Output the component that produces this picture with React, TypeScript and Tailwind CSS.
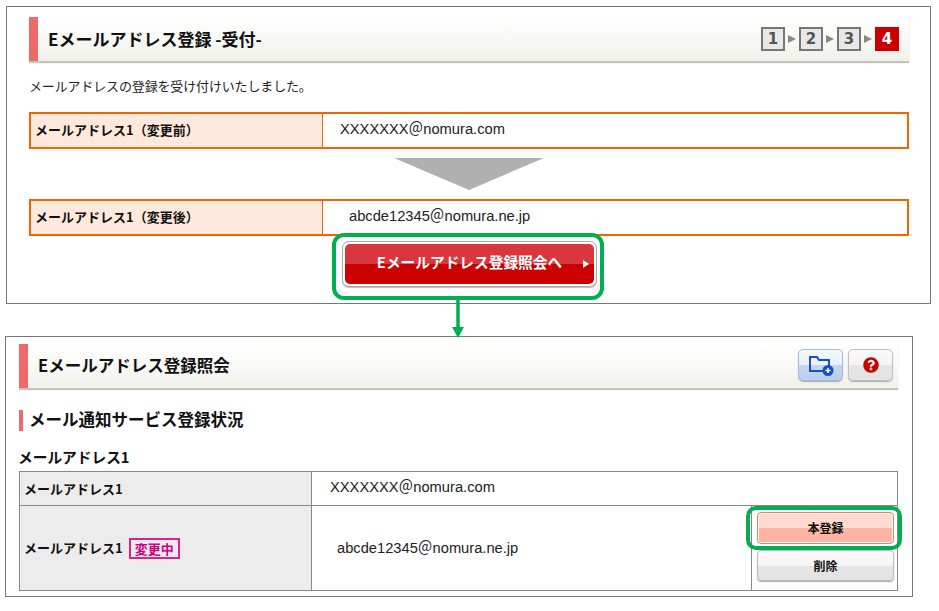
import { FaQuestionCircle } from "react-icons/fa";

const jp = "font-['Noto_Sans_CJK_JP','Liberation_Sans',sans-serif]";
const val = "font-['Liberation_Sans','Noto_Sans_CJK_JP',sans-serif]";

function PageTitle({ title, size, children }: { title: string; size: string; children?: React.ReactNode }) {
  return (
    <div className="flex h-[44px] items-center justify-between border-l-[9px] border-[#ec6a6a] bg-gradient-to-b from-white to-[#f1f1eb] shadow-[0_2px_1px_#c4c4bc]">
      <h1 className={`${jp} ${size} pb-[1px] pl-[10px] font-bold leading-none text-[#111]`}>{title}</h1>
      {children}
    </div>
  );
}

function StepBox({ n, active }: { n: number; active?: boolean }) {
  return (
    <div
      className={
        active
          ? "flex size-6 items-center justify-center bg-[#cc0000] font-['DejaVu_Sans',sans-serif] text-[15px] font-bold text-white"
          : "flex size-6 items-center justify-center border-2 border-[#777] bg-[#e8e8e8] font-['DejaVu_Sans',sans-serif] text-[15px] font-bold text-[#555]"
      }
    >
      {n}
    </div>
  );
}

function StepArrow() {
  return <div className="mx-[3px] h-0 w-0 border-y-[4px] border-l-[8px] border-y-transparent border-l-[#888]" />;
}

function OrangeRow({ label, value, pad }: { label: string; value: string; pad: string }) {
  return (
    <div className="flex h-[37px] border-2 border-[#f26500]">
      <div className={`${jp} flex w-[292px] items-center border-r border-[#f26500] bg-[#ffe9dc] pb-[2px] pl-[4px] text-[13px] font-bold text-[#111]`}>
        {label}
      </div>
      <div className={`${val} ${pad} flex flex-1 items-center pb-[2px] text-[14.7px] text-[#222]`}>{value}</div>
    </div>
  );
}

function GreyLabel({ children }: { children: React.ReactNode }) {
  return (
    <div className={`${jp} flex w-[292px] shrink-0 items-center gap-[6px] border-r border-[#888] bg-[#ececec] pl-[4px] text-[13px] font-bold text-[#111]`}>
      {children}
    </div>
  );
}

export default function App() {
  return (
    <div className="h-[611px] w-[939px] overflow-hidden bg-white">
      <section className="relative ml-[6px] mt-[6px] h-[298px] w-[925px] border border-[#777] pl-[22px] pr-[21px] pt-[10px]">
        <PageTitle title="Eメールアドレス登録 -受付-" size="text-[17px]">
          <div className="mr-[10px] flex items-center">
            <StepBox n={1} />
            <StepArrow />
            <StepBox n={2} />
            <StepArrow />
            <StepBox n={3} />
            <StepArrow />
            <StepBox n={4} active />
          </div>
        </PageTitle>
        <p className={`${jp} mt-[15px] text-[13px] leading-[19px] tracking-[-0.15px] text-[#222]`}>
          メールアドレスの登録を受け付けいたしました。
        </p>
        <div className="mt-[17px]">
          <OrangeRow label="メールアドレス1（変更前）" value="XXXXXXX＠nomura.com" pad="pl-[17px]" />
        </div>
        <div className="mx-auto mt-[9px] h-0 w-0 border-x-[75px] border-t-[32px] border-x-transparent border-t-[#b0b0b0]" />
        <div className="mt-[9px]">
          <OrangeRow label="メールアドレス1（変更後）" value="abcde12345＠nomura.ne.jp" pad="pl-[26px]" />
        </div>

        <div className="relative ml-[313px] mt-[5px] h-[46px] w-[255px] rounded-[7px] border border-[#aaa] bg-white p-[2px] shadow-[0_1px_1px_#bbb]">
          <button className="relative flex h-[40px] w-full items-center justify-center rounded-[5px] bg-[linear-gradient(#d9363e_0,#d9363e_50%,#cc0000_50%,#cc0000_100%)] pb-[3px] text-[14.7px] font-bold leading-none text-white">
            <span className={jp}>Eメールアドレス登録照会へ</span>
            <span className="absolute right-[5px] top-[16px] h-0 w-0 border-y-[4px] border-l-[6px] border-y-transparent border-l-white" />
          </button>
          <div className="absolute -bottom-[14px] -left-[11px] -right-[8px] -top-[9px] rounded-[12px] border-[4px] border-[#00b050]" />
          <svg className="absolute left-[109px] top-[58px]" width="12" height="38" viewBox="0 0 12 38">
            <path d="M6 0V28" stroke="#00b050" strokeWidth="3.5" />
            <path d="M0 27H12L6 38Z" fill="#00b050" />
          </svg>
        </div>
      </section>

      <section className="ml-[5px] mt-[32px] h-[261px] w-[908px] border border-[#777] pl-[13px] pr-[14px] pt-[7px]">
        <PageTitle title="Eメールアドレス登録照会" size="text-[16.5px]">
          <div className="mb-[2px] mr-[5px] flex gap-[5px]">
            <button className="flex h-[32px] w-[45px] items-center justify-center rounded-[5px] border border-[#a5bad8] bg-[linear-gradient(#f4f8fd_0,#e8f0fb_50%,#c4d7f2_50%,#b9cfee_100%)] shadow-[0_1px_1px_#aaa]">
              <svg width="26" height="22" viewBox="0 0 26 22">
                <path d="M2 3H9L11 6H21V17H2Z" fill="none" stroke="#1a4fc4" strokeWidth="2" />
                <circle cx="20" cy="16.5" r="5.5" fill="#1a4fc4" />
                <path d="M17.5 16.5H22.5M20 14V19" stroke="#fff" strokeWidth="1.6" />
              </svg>
            </button>
            <button className="flex h-[32px] w-[45px] items-center justify-center rounded-[5px] border border-[#c0c0c0] bg-[linear-gradient(#fafafa_0,#f4f4f4_50%,#e6e6e6_50%,#e2e2e2_100%)] shadow-[0_1px_1px_#aaa]">
              <FaQuestionCircle className="size-[16px] text-[#cc0000]" />
            </button>
          </div>
        </PageTitle>

        <h2 className={`${jp} mt-[22px] flex h-[21px] items-center border-l-[4px] border-[#ec6a6a] pb-[2px] pl-[6px] text-[16.5px] font-bold leading-none text-[#111]`}>
          メール通知サービス登録状況
        </h2>
        <h3 className={`${jp} -ml-px mt-[17px] h-[23px] text-[14.7px] font-bold leading-[18px] text-[#111]`}>メールアドレス1</h3>

        <div className="border border-[#888]">
          <div className="flex h-[34px] border-b border-[#888]">
            <GreyLabel>メールアドレス1</GreyLabel>
            <div className={`${val} flex flex-1 items-center pb-[2px] pl-[18px] text-[14.7px] text-[#222]`}>XXXXXXX＠nomura.com</div>
          </div>
          <div className="flex h-[84px]">
            <GreyLabel>
              メールアドレス1
              <span className="border-2 border-[#e0218a] px-[4px] text-[13px] leading-[17px] text-[#cc0080]">変更中</span>
            </GreyLabel>
            <div className={`${val} flex flex-1 items-center pl-[25px] text-[14.7px] text-[#222]`}>abcde12345＠nomura.ne.jp</div>
            <div className="flex w-[146px] flex-col gap-[6px] border-l border-[#888] pl-[5px] pt-[6px]">
              <div className="relative">
                <button className={`${jp} h-[32px] w-[137px] rounded-[4px] border border-[#ee7f66] bg-[linear-gradient(#ffdccf_0,#ffdccf_50%,#ffb3a2_50%,#ffb3a2_100%)] text-[12px] font-bold text-[#111] shadow-[inset_0_0_0_1px_#fff]`}>
                  本登録
                </button>
                <div className="absolute -bottom-[6px] -left-[11px] -right-[5px] -top-[6px] rounded-[10px] border-[4px] border-[#00b050]" />
              </div>
              <button className={`${jp} h-[31px] w-[137px] rounded-[4px] border border-[#bbb] bg-[linear-gradient(#fbfbfb_0,#f5f5f5_50%,#e6e6e6_50%,#e2e2e2_100%)] text-[12px] font-bold text-[#111] shadow-[0_1px_1px_#aaa]`}>
                削除
              </button>
            </div>
          </div>
        </div>
      </section>
    </div>
  );
}
